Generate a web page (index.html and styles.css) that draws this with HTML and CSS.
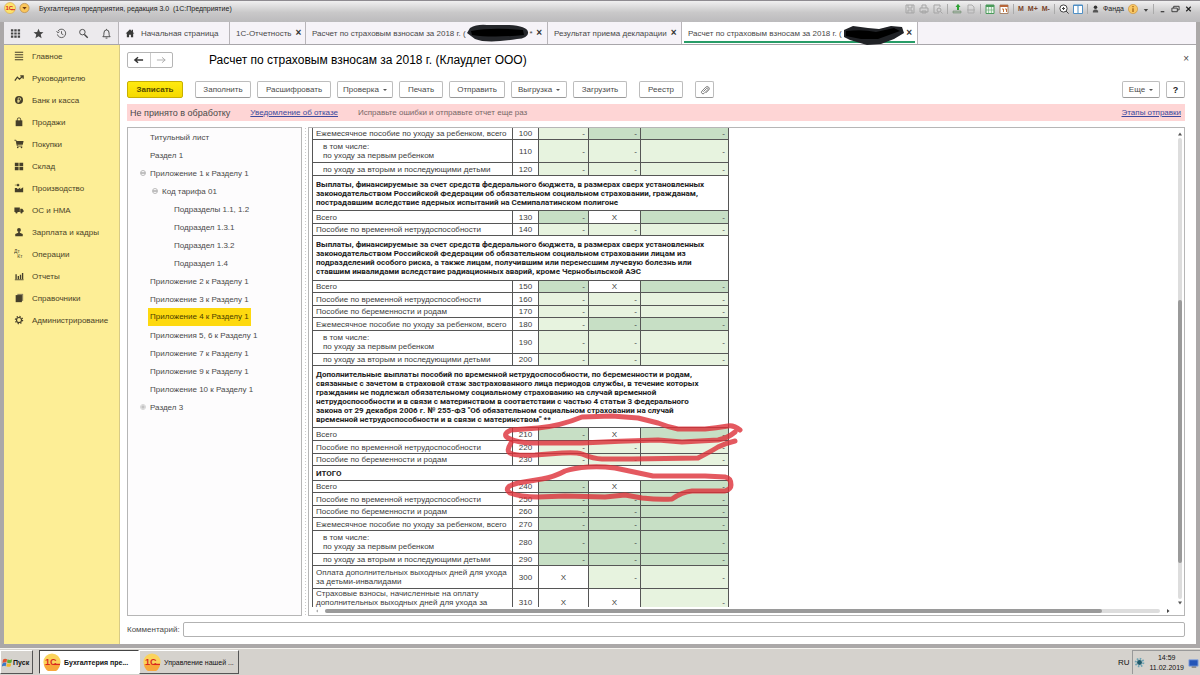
FILE: index.html
```html
<!DOCTYPE html>
<html lang="ru">
<head>
<meta charset="utf-8">
<title>Бухгалтерия предприятия</title>
<link rel="stylesheet" href="styles.css">
</head>
<body>
<div class="window">
  <header class="titlebar">
    <svg class="logo" viewBox="0 0 12 12"><circle cx="6" cy="6" r="5.5" fill="#fde36b" stroke="#d9a54a" stroke-width=".6"/><text class="mark" x="1.500" y="8" font-size="6">1С</text><path d="M7 7.700h4" stroke="#d9281e"/></svg>
    <svg class="logo" viewBox="0 0 12 12"><circle cx="6" cy="6" r="5" fill="#fbc65a" stroke="#b98a4a" stroke-width=".8"/><path d="M3.6 5h4.8L6 7.6z" fill="#6b3a10"/></svg>
    <span class="app-title">Бухгалтерия предприятия, редакция 3.0&nbsp; (1С:Предприятие)</span>
    <div class="tools">
      <svg viewBox="0 0 10 10"><path d="M1 1h8v8H1zM3 1v3h4V1M3 9V6h4v3" fill="none" stroke="#a5a5a5"/></svg>
      <svg viewBox="0 0 10 10"><path d="M1 4h8v4H1zM3 4V1h4v3M3 7h4v2H3z" fill="none" stroke="#a5a5a5"/></svg>
      <svg viewBox="0 0 10 10"><path d="M6 9H1V1h6v2" fill="none" stroke="#a5a5a5"/><circle cx="6" cy="6" r="2" fill="none" stroke="#a5a5a5"/><path d="M7.5 7.5L9.5 9.5" stroke="#a5a5a5"/></svg>
      <i></i>
      <svg viewBox="0 0 10 10"><path d="M1 7h8v2H1z" fill="#a8b8a8" stroke="#6e8a6e" stroke-width=".6"/><path d="M1 5l3-1M5 6V3H3.500L6-.2 8.500 3H7v3z" fill="#2fa336"/></svg>
      <svg viewBox="0 0 10 10"><path d="M2 1h4l2 2v6H2zM1 6h8" fill="none" stroke="#adadad"/></svg>
      <i></i>
      <svg viewBox="0 0 10 10"><path d="M1 1h8v8.500H1z" fill="#eef6ee" stroke="#4a9a5a"/><path d="M1 1h8v2H1z" fill="#4a9a5a"/><path d="M3.600 3v6M6.400 3v6M1 6h8" stroke="#6eb07a" stroke-width=".7"/></svg>
      <svg viewBox="0 0 10 10"><path d="M1 1h8v8.500H1z" fill="#fff" stroke="#a8846a"/><path d="M1 1h8v2H1z" fill="#b8673a"/><path d="M3 5h1.500v3M6 5h1.500v3" fill="none" stroke="#c0703a"/></svg>
      <i></i>
      <b>M</b><b>M+</b><b>M-</b>
      <i></i>
      <svg viewBox="0 0 10 10"><circle cx="4.500" cy="4.500" r="3.600" fill="#fff" stroke="#444"/><path d="M7 7l2.600 2.600M3 4.500h3M4.500 3v3" stroke="#444"/></svg>
      <svg viewBox="0 0 10 10"><path d="M.5 1h9v8.500h-9z" fill="#fff" stroke="#4f8fc4"/><path d="M0 1.500h10M5 1v8" stroke="#4f8fc4"/></svg>
      <i></i>
      <svg class="narrow" viewBox="0 0 8 10"><circle cx="4" cy="3" r="2" fill="#333"/><path d="M1 9V7l2-1.500h2L7 7v2z" fill="#555"/></svg>
      <span>Фанда</span>
      <svg viewBox="0 0 10 10"><circle cx="5" cy="5" r="4.600" fill="#f8c765" stroke="#c98e35" stroke-width=".6"/><path d="M5 4.300V8M5 2v1.300" stroke="#a4620f" stroke-width="1.300"/></svg>
      <svg class="narrow" viewBox="0 0 8 10"><path d="M2 5h5L4.500 8z" fill="#444"/></svg>
      <i></i>
      <svg class="win" viewBox="0 0 10 10"><path d="M3 8h4" stroke="#333" stroke-width="1.300"/></svg>
      <svg class="win" viewBox="0 0 10 10"><path d="M3 4V2h6v4H7M1 4h6v4H1z" fill="none" stroke="#333"/></svg>
      <svg class="win" viewBox="0 0 10 10"><path d="M2.500 2.500l5 5M7.500 2.500l-5 5" stroke="#222" stroke-width="1.300"/></svg>
    </div>
  </header>

  <div class="app">
    <nav class="tabs">
      <div class="quick">
        <svg viewBox="0 0 12 12"><path d="M1 2.500h10M1 6h10M1 9.500h10" stroke="#444" stroke-width="2.400" stroke-dasharray="2.600 1.100"/></svg>
        <svg viewBox="0 0 12 12"><path d="M6 .8l1.500 3.600 3.900.3-3 2.500 1 3.900L6 9l-3.400 2.100 1-3.900-3-2.500 3.900-.3z" fill="#444"/></svg>
        <svg viewBox="0 0 12 12"><path d="M2 3.500A4.600 4.600 0 1 1 1.500 7M.6 3.500L2 5.300 3.800 4M6 3.500V6.300l2 1" fill="none" stroke="#555"/></svg>
        <svg viewBox="0 0 12 12"><circle cx="4.800" cy="4.500" r="3" fill="none" stroke="#444"/><path d="M7 7l3.600 3.600" stroke="#444" stroke-width="1.500"/></svg>
        <svg viewBox="0 0 12 12"><path d="M2 9.500c1.200-1 1.200-2 1.200-4a2.800 3.400 0 0 1 5.600 0c0 2 0 3 1.200 4zM5 11h2M6 1v1" fill="none" stroke="#444"/></svg>
      </div>
      <div class="tab home"><svg viewBox="0 0 12 12"><path d="M6 1.500L.8 6.500h1.400V11h2.700V8h2.200v3h2.700V6.500h1.400L9.600 5V2H8v1.500z" fill="#3a3a3a"/></svg>Начальная страница</div>
      <div class="tab t2">1С-Отчетность<button aria-label="Закрыть">×</button></div>
      <div class="tab t3"><span>Расчет по страховым взносам за 2018 г. (</span><svg class="blot" viewBox="0 0 62 20"><path d="M3 5Q10 1 20 2L42 2Q60 3 61 9Q62 15 50 16Q20 21 8 16L0 10z" fill="#24262a"/><path d="M4 8Q25 4 56 7L57 12Q25 15 5 12z" fill="#000"/></svg><span>*</span><button aria-label="Закрыть">×</button></div>
      <div class="tab t4">Результат приема декларации<button aria-label="Закрыть">×</button></div>
      <div class="tab t5 active"><span>Расчет по страховым взносам за 2018 г. (</span><svg class="blot low" viewBox="0 0 62 20"><path d="M1 5L10 1 25 3 36 4 48 1 59 2 61 8 51 14 38 19 24 20 7 15 1 12z" fill="#202226"/><path d="M3 6Q20 4 33 7L51 3 57 6 35 14 18 14 3 11z" fill="#000"/></svg><button aria-label="Закрыть">×</button></div>
    </nav>

    <div class="body">
      <aside class="sections">
        <a href="#"><svg viewBox="0 0 12 12"><path d="M1 1.500h10M1 4.500h10M1 7.500h10M1 10.500h10" stroke="#453f2a" stroke-width="1.300"/></svg>Главное</a>
        <a href="#"><svg viewBox="0 0 12 12"><path d="M1 9l3-4 2.500 2.500L10.500 4M7.500 3.500H11V7" fill="none" stroke="#453f2a" stroke-width="1.500"/></svg>Руководителю</a>
        <a href="#"><svg viewBox="0 0 12 12"><circle cx="6" cy="6" r="4.800" fill="#453f2a"/><path d="M5 9.500V3.500h1.600a1.500 1.500 0 0 1 0 3H4M4 8h3" fill="none" stroke="#fff09a" stroke-width=".9"/></svg>Банк и касса</a>
        <a href="#"><svg viewBox="0 0 12 12"><path d="M2 4h8v7H2z" fill="#453f2a"/><path d="M4 5V2.500a2 1.500 0 0 1 4 0V5" fill="none" stroke="#453f2a"/></svg>Продажи</a>
        <a href="#"><svg viewBox="0 0 12 12"><path d="M.5 1.500h2L4 8.500h6" fill="none" stroke="#453f2a"/><path d="M2.500 2.500h9l-1 4.500h-7z" fill="#453f2a"/><circle cx="4.500" cy="10.200" r="1" fill="#453f2a"/><circle cx="9" cy="10.200" r="1" fill="#453f2a"/></svg>Покупки</a>
        <a href="#"><svg viewBox="0 0 12 12"><path d="M1 2h4.500v4H1zM6.500 2H11v4H6.500zM1 7h4.500v4H1zM6.500 7H11v4H6.500z" fill="#453f2a"/></svg>Склад</a>
        <a href="#"><svg viewBox="0 0 12 12"><path d="M1 11V6h2.500l1 1.500L7.500 5.500v2L11 5v6z" fill="#453f2a"/><path d="M1 2.500h1.500M3.500 1.500H6v2H3.500z" fill="#453f2a" stroke="#453f2a" stroke-width=".6"/></svg>Производство</a>
        <a href="#"><svg viewBox="0 0 12 12"><path d="M.5 3H7v5.500H.5zM7.500 4.500H10l1.500 2v2h-4z" fill="#453f2a"/><circle cx="3" cy="9" r="1.300" fill="#453f2a"/><circle cx="9" cy="9" r="1.300" fill="#453f2a"/></svg>ОС и НМА</a>
        <a href="#"><svg viewBox="0 0 12 12"><circle cx="6" cy="3.500" r="2.300" fill="#453f2a"/><path d="M5 5h2v2l3.500 1.500V11h-9V8.500L5 7z" fill="#453f2a"/></svg>Зарплата и кадры</a>
        <a href="#"><svg viewBox="0 0 12 12"><text x="0" y="5" font-size="6" fill="#453f2a">Дт</text><text x="4" y="11" font-size="6" fill="#453f2a">Кт</text></svg>Операции</a>
        <a href="#"><svg viewBox="0 0 12 12"><path d="M2.500 10V4M5.200 10V6M7.800 10V4.500M10.300 10V2.500" stroke="#453f2a" stroke-width="1.600"/><path d="M1 10.500h10.500" stroke="#453f2a"/></svg>Отчеты</a>
        <a href="#"><svg viewBox="0 0 12 12"><path d="M4 1h7v8.500H4z" fill="#8d8460"/><path d="M2 2.500h7.500V11H2z" fill="#453f2a"/></svg>Справочники</a>
        <a href="#"><svg viewBox="0 0 12 12"><circle cx="6" cy="6" r="3" fill="none" stroke="#453f2a" stroke-width="1.400"/><circle cx="6" cy="6" r="4.300" fill="none" stroke="#453f2a" stroke-width="1.500" stroke-dasharray="1.500 1.877"/></svg>Администрирование</a>
      </aside>

      <main class="content">
        <div class="heading">
          <div class="history"><button aria-label="Назад"><svg viewBox="0 0 12 10"><path d="M2 5h9M5.500 2L2 5l3.500 3" fill="none" stroke="#333" stroke-width="1.500"/></svg></button><button aria-label="Вперед"><svg viewBox="0 0 12 10"><path d="M1 5h9M6.500 2L10 5 6.500 8" fill="none" stroke="#aaa"/></svg></button></div>
          <h1>Расчет по страховым взносам за 2018 г. (Клаудлет ООО)</h1>
          <button class="close" aria-label="Закрыть">×</button>
        </div>
        <div class="commands">
          <button class="primary w56">Записать</button>
          <button class="w56 gap-l">Заполнить</button>
          <button class="w74">Расшифровать</button>
          <button class="w56">Проверка <em></em></button>
          <button class="w44">Печать</button>
          <button class="w56">Отправить</button>
          <button class="w56">Выгрузка <em></em></button>
          <button class="w54">Загрузить</button>
          <button class="w44 gap-l">Реестр</button>
          <button class="w18 gap-l" aria-label="Файлы"><svg viewBox="0 0 12 12"><path d="M4 8l4-4a1 1 0 0 1 1.500 1.500L5 10A1.900 1.900 0 0 1 2.300 7.300L7 2.500a2.500 2.500 0 0 1 3.700 3.300L7 9.500" fill="none" stroke="#666"/></svg></button>
          <button class="w38 right">Еще <em></em></button>
          <button class="w18 help">?</button>
        </div>
        <div class="notice">
          <strong>Не принято в обработку</strong>
          <a href="#">Уведомление об отказе</a>
          <span>Исправьте ошибки и отправьте отчет еще раз</span>
          <a class="right" href="#">Этапы отправки</a>
        </div>

        <div class="panes">
          <ul class="tree">
            <li><span>Титульный лист</span></li>
            <li><span>Раздел 1</span></li>
            <li><svg viewBox="0 0 8 8"><circle cx="4" cy="4" r="2.500" fill="none" stroke="#aaa" stroke-width=".8"/><path d="M2 4h4" stroke="#888"/></svg><span>Приложение 1 к Разделу 1</span></li>
            <li class="l2"><svg viewBox="0 0 8 8"><circle cx="4" cy="4" r="2.500" fill="none" stroke="#aaa" stroke-width=".8"/><path d="M2 4h4" stroke="#888"/></svg><span>Код тарифа 01</span></li>
            <li class="l3"><span>Подразделы 1.1, 1.2</span></li>
            <li class="l3"><span>Подраздел 1.3.1</span></li>
            <li class="l3"><span>Подраздел 1.3.2</span></li>
            <li class="l3"><span>Подраздел 1.4</span></li>
            <li><span>Приложение 2 к Разделу 1</span></li>
            <li><span>Приложение 3 к Разделу 1</span></li>
            <li class="selected"><span>Приложение 4 к Разделу 1</span></li>
            <li><span>Приложения 5, 6 к Разделу 1</span></li>
            <li><span>Приложение 7 к Разделу 1</span></li>
            <li><span>Приложение 9 к Разделу 1</span></li>
            <li><span>Приложение 10 к Разделу 1</span></li>
            <li><svg viewBox="0 0 8 8"><circle cx="4" cy="4" r="2.500" fill="none" stroke="#bbb" stroke-width=".6"/><path d="M2 4h4M4 2v4" stroke="#999" stroke-width=".7"/></svg><span>Раздел 3</span></li>
          </ul>
          <div class="splitter"></div>
          <section class="report">
            <div class="sheet">
              <table>
                <colgroup><col class="c-name"><col class="c-code"><col class="c-a"><col class="c-b"><col class="c-c"></colgroup>
                <tbody>
                <tr class="s"><td>Ежемесячное пособие по уходу за ребенком, всего</td><td>100</td><td class="g">-</td><td class="d">-</td><td class="d">-</td></tr>
                <tr class="two"><td class="in">в том числе:<br>по уходу за первым ребенком</td><td>110</td><td class="g">-</td><td class="g">-</td><td class="g">-</td></tr>
                <tr class="m"><td class="in">по уходу за вторым и последующими детьми</td><td>120</td><td class="g">-</td><td class="g">-</td><td class="g">-</td></tr>
                <tr class="h3"><th colspan="5">Выплаты, финансируемые за счет средств федерального бюджета, в размерах сверх установленных<br>законодательством Российской Федерации об обязательном социальном страховании, гражданам,<br>пострадавшим вследствие ядерных испытаний на Семипалатинском полигоне</th></tr>
                <tr class="m"><td>Всего</td><td>130</td><td class="d">-</td><td class="x">Х</td><td class="d">-</td></tr>
                <tr class="s"><td>Пособие по временной нетрудоспособности</td><td>140</td><td class="g">-</td><td class="g">-</td><td class="g">-</td></tr>
                <tr class="h4"><th colspan="5">Выплаты, финансируемые за счет средств федерального бюджета, в размерах сверх установленных<br>законодательством Российской Федерации об обязательном социальном страховании лицам из<br>подразделений особого риска, а также лицам, получившим или перенесшим лучевую болезнь или<br>ставшим инвалидами вследствие радиационных аварий, кроме Чернобыльской АЭС</th></tr>
                <tr class="s"><td>Всего</td><td>150</td><td class="d">-</td><td class="x">Х</td><td class="d">-</td></tr>
                <tr class="m"><td>Пособие по временной нетрудоспособности</td><td>160</td><td class="g">-</td><td class="g">-</td><td class="g">-</td></tr>
                <tr class="s"><td>Пособие по беременности и родам</td><td>170</td><td class="g">-</td><td class="g">-</td><td class="g">-</td></tr>
                <tr class="m"><td>Ежемесячное пособие по уходу за ребенком, всего</td><td>180</td><td class="g">-</td><td class="d">-</td><td class="d">-</td></tr>
                <tr class="two"><td class="in">в том числе:<br>по уходу за первым ребенком</td><td>190</td><td class="g">-</td><td class="g">-</td><td class="g">-</td></tr>
                <tr class="s"><td class="in">по уходу за вторым и последующими детьми</td><td>200</td><td class="g">-</td><td class="g">-</td><td class="g">-</td></tr>
                <tr class="h6"><th colspan="5">Дополнительные выплаты пособий по временной нетрудоспособности, по беременности и родам,<br>связанные с зачетом в страховой стаж застрахованного лица периодов службы, в течение которых<br>гражданин не подлежал обязательному социальному страхованию на случай временной<br>нетрудоспособности и в связи с материнством в соответствии с частью 4 статьи 3 Федерального<br>закона от 29 декабря 2006 г. № 255-ФЗ "Об обязательном социальном страховании на случай<br>временной нетрудоспособности и в связи с материнством" **</th></tr>
                <tr class="m"><td>Всего</td><td>210</td><td class="d">-</td><td class="x">Х</td><td class="d">-</td></tr>
                <tr class="m"><td>Пособие по временной нетрудоспособности</td><td>220</td><td class="g">-</td><td class="g">-</td><td class="g">-</td></tr>
                <tr class="s"><td>Пособие по беременности и родам</td><td>230</td><td class="g">-</td><td class="g">-</td><td class="g">-</td></tr>
                <tr class="h1"><th colspan="5">ИТОГО</th></tr>
                <tr class="s"><td>Всего</td><td>240</td><td class="d">-</td><td class="x">Х</td><td class="d">-</td></tr>
                <tr class="m"><td>Пособие по временной нетрудоспособности</td><td>250</td><td class="d">-</td><td class="d">-</td><td class="d">-</td></tr>
                <tr class="s"><td>Пособие по беременности и родам</td><td>260</td><td class="d">-</td><td class="d">-</td><td class="d">-</td></tr>
                <tr class="m"><td>Ежемесячное пособие по уходу за ребенком, всего</td><td>270</td><td class="d">-</td><td class="d">-</td><td class="d">-</td></tr>
                <tr class="two"><td class="in">в том числе:<br>по уходу за первым ребенком</td><td>280</td><td class="d">-</td><td class="d">-</td><td class="d">-</td></tr>
                <tr class="s"><td class="in">по уходу за вторым и последующими детьми</td><td>290</td><td class="d">-</td><td class="d">-</td><td class="d">-</td></tr>
                <tr class="two"><td>Оплата дополнительных выходных дней для ухода<br>за детьми-инвалидами</td><td>300</td><td class="x">Х</td><td class="g">-</td><td class="g">-</td></tr>
                <tr class="last"><td>Страховые взносы, начисленные на оплату<br>дополнительных выходных дней для ухода за</td><td>310</td><td class="x">Х</td><td class="x">Х</td><td class="g">-</td></tr>
                </tbody>
              </table>
            </div>
            <div class="vbar"><svg viewBox="0 0 8 8"><path d="M2 5.500h4L4 2.500z" fill="#555"/></svg><div class="track"><div class="thumb"></div></div><svg viewBox="0 0 8 8"><path d="M2 2.500h4L4 5.500z" fill="#555"/></svg></div>
            <div class="hbar"><svg viewBox="0 0 8 8"><path d="M5 2.500v3L3 4z" fill="#aaa"/></svg><div class="track"><div class="thumb"></div></div><svg viewBox="0 0 8 8"><path d="M3 2v4l2.500-2z" fill="#444"/></svg></div>
            <svg class="marks" viewBox="500 405 250 100" fill="none" stroke="#dd3038" stroke-opacity=".8" stroke-width="5" stroke-linecap="round" stroke-linejoin="round">
              <path d="M740 430Q734 425 728 426Q716 428 705 429L678 429Q668 427 658 423L638 418 612 416 582 417Q560 426 538 428L511 430Q502 434 508 438Q518 443 532 443L582 443Q620 441 658 440L682 442 718 440Q728 438 735 432"/>
              <path d="M511 443Q506 451 510 453Q514 456 535 455L562 453Q576 452 582 454Q594 459 602 459L632 459 698 458Q710 452 718 447Q726 443 735 441"/>
              <path d="M542 479L518 483Q502 487 510 493Q520 497 538 497L565 496 605 497 625 495 642 498Q660 500 672 499Q682 492 692 491L725 491Q731 489 731 485Q731 478 725 477L705 476 653 476 615 468Q600 466 588 467Q574 468 565 471Q554 477 542 479z"/>
            </svg>
          </section>
        </div>
        <div class="comment"><label for="comment">Комментарий:</label><input id="comment" type="text"></div>
      </main>
    </div>
  </div>
</div>

<footer class="taskbar">
  <button class="start"><svg viewBox="0 0 12 12"><path d="M1 3Q3 1 5.500 2.500L4.800 6Q3 5 .5 6.500z" fill="#e0522d"/><path d="M6 2.500Q8.500 4 11 2.500L10.400 6Q8 7.500 5.500 6z" fill="#62aa35"/><path d="M.5 7Q3 5.500 4.700 6.500L4 10Q2 9-.3 10.500z" fill="#3b78c6"/><path d="M5.300 6.700Q7.500 8 10 6.700L9.500 10Q7 11.500 4.700 10z" fill="#f2b92e"/></svg>Пуск</button>
  <button class="task current"><svg viewBox="0 0 18 18"><circle cx="9" cy="9" r="8.600" fill="#fbd35c"/><path d="M1 11a8 8 0 0 0 16 0z" fill="#f8a83b"/><text class="mark" x="2" y="12" font-size="9">1С</text><path d="M10.500 11.400H17" stroke="#d9281e" stroke-width="1.300"/></svg>Бухгалтерия пре...</button>
  <button class="task"><svg viewBox="0 0 18 18"><circle cx="9" cy="9" r="8.600" fill="#fbd35c"/><path d="M1 11a8 8 0 0 0 16 0z" fill="#f8a83b"/><text class="mark" x="2" y="12" font-size="9">1С</text><path d="M10.500 11.400H17" stroke="#d9281e" stroke-width="1.300"/></svg>Управление нашей ...</button>
  <span class="lang">RU</span>
  <div class="tray"><svg viewBox="0 0 12 12"><circle cx="6" cy="6" r="4" fill="none" stroke="#6fa5b5" stroke-width="2.500" stroke-dasharray="1.600 1.500"/><circle cx="6" cy="6" r="2.700" fill="#1e5a6c"/></svg><time>14:59<br>11.02.2019</time><svg viewBox="0 0 12 12"><path d="M1 3h10v7H1z" fill="#2456b8" stroke="#8ba7dc"/><path d="M4 11h5" stroke="#555"/></svg></div>
</footer>
</body>
</html>
```

FILE: styles.css
```css
* { box-sizing: border-box; }
body { margin: 0; height: 100vh; display: flex; flex-direction: column; font-family: "Liberation Sans", Arial, sans-serif; font-size: 8px; color: #4a4a4a; background: #d5d2cd; overflow: hidden; }
button, input { font: inherit; color: inherit; }
button { padding: 0; border: 0; background: none; }
svg { display: block; flex: none; }
.mark { font-weight: bold; fill: #d9281e; }

.window { flex: 1; min-height: 0; display: flex; flex-direction: column; padding: 0 4px 4px; background: #aba8a8; border-top: 1px solid #8e8b90; }
.titlebar { flex: none; height: 21px; display: flex; align-items: flex-start; gap: 3px; margin: 0 -4px; padding: 1px 7px 0 4px; background: linear-gradient(#f0f0f0, #c9c8c9 55%, #bcbbbd); color: #222; font-size: 7px; }
.logo { width: 12px; height: 12px; }
.logo + .logo { width: 11px; }
.app-title { margin-left: 6px; line-height: 13px; }
.tools { margin-left: auto; height: 13px; display: flex; align-items: center; gap: 4px; }
.tools svg { width: 10px; height: 10px; }
.tools svg.narrow { width: 7px; }
.tools svg.win { width: 9px; }
.tools i { width: 1px; height: 10px; background: #aaa; }
.tools b { color: #79452a; }

.app { flex: 1; min-height: 0; display: flex; flex-direction: column; background: #fff; }
.tabs { flex: none; height: 23px; display: flex; background: #f6f3f8; border-bottom: 1px solid #a8a6aa; color: #484848; }
.quick { width: 115px; display: flex; align-items: center; justify-content: space-between; padding: 0 6px; border-right: 1px solid #b8b5b9; background: #eceaed; }
.quick svg { width: 11px; height: 11px; }
.tab { display: flex; align-items: center; gap: 4px; padding: 0 5px 0 6px; border-right: 1px solid #b8b5b9; white-space: nowrap; }
.tab button { margin-left: auto; font-size: 10px; font-weight: bold; line-height: 12px; color: #333; }
.home { width: 111px; gap: 6px; }
.home svg { width: 10px; height: 10px; }
.t2 { width: 76px; }
.t3 { width: 242px; gap: 1px; }
.t4 { width: 134px; }
.t5 { width: 236px; gap: 1px; }
.tab.active { background: linear-gradient(#279c67, #279c67) center bottom 1px / calc(100% - 4px) 2px no-repeat #fff; }
.blot { width: 62px; height: 20px; }
.blot.low { margin-top: 4px; }

.body { flex: 1; min-height: 0; display: flex; }
.sections { flex: none; width: 116px; display: flex; flex-direction: column; background: #fdee96; border-right: 1px solid #d8cb86; }
.sections a { display: flex; align-items: center; gap: 8px; height: 22px; padding-left: 10px; color: #4a4328; text-decoration: none; }
.sections svg { width: 10px; height: 10px; }

.content { flex: 1; min-width: 0; display: flex; flex-direction: column; padding: 7px 11px 7px 7px; }
.heading { flex: none; display: flex; align-items: center; height: 16px; }
.history { width: 46px; height: 16px; display: flex; border: 1px solid #b5b5b5; border-radius: 2px; }
.history button { flex: 1; display: grid; place-items: center; }
.history button + button { border-left: 1px solid #ccc; }
.history svg { width: 11px; height: 10px; }
h1 { margin: 0 0 0 36px; font-size: 12px; font-weight: normal; line-height: 16px; color: #000; }
.close { margin-left: auto; font-size: 10px; line-height: 14px; margin-right: -4px; align-self: flex-start; }
.commands { flex: none; display: flex; gap: 6px; margin-top: 13px; height: 17px; }
.commands button { height: 17px; display: flex; align-items: center; justify-content: center; gap: 4px; border: 1px solid #bdbdbd; border-bottom-color: #999; border-radius: 2px; background: #fff; white-space: nowrap; }
.commands em { border: 2px solid transparent; border-top-color: #555; border-bottom: 0; }
.commands svg { width: 10px; height: 10px; }
.commands .primary { background: linear-gradient(#ffea10, #f5d900); border-color: #c8b000; font-weight: bold; color: #554a00; }
.commands .w56 { width: 56px; }
.commands .w74 { width: 74px; }
.commands .w44 { width: 44px; }
.commands .w54 { width: 54px; }
.commands .w38 { width: 38px; }
.commands .w18 { width: 19px; }
.commands .gap-l { margin-left: 6px; }
.commands .help { font-weight: bold; color: #222; font-size: 9px; }
.right, .commands .right { margin-left: auto; }
.notice { flex: none; display: flex; align-items: center; gap: 20px; margin-top: 6px; height: 17px; padding: 0 4px 0 3px; background: #fed5d5; }
.notice strong { font-size: 9px; font-weight: normal; }
.notice a { color: #3c4a9e; }
.notice span { color: #776868; }

.panes { flex: 1; min-height: 0; display: flex; margin-top: 6px; }
.tree { width: 175px; flex: none; margin: 0; padding: 0 0 0 9px; list-style: none; border: 1px solid #b6b6b6; background: #fdfcfd; }
.tree li { height: 18px; display: flex; align-items: center; padding-left: 13px; white-space: nowrap; }
.tree li svg { width: 8px; height: 8px; margin: 0 3px 0 -11px; }
.tree .l2 { padding-left: 25px; }
.tree .l3 { padding-left: 37px; }
.tree .selected span { margin-left: -2px; padding: 0 2px; line-height: 18px; background: #fed90f; color: #4a3c00; }
.splitter { width: 6px; flex: none; background: radial-gradient(circle, #ccc 1px, transparent 1px) center / 3px 3px repeat-y; }
.report { flex: 1; min-width: 0; position: relative; display: grid; grid-template: minmax(0, 1fr) 8px / minmax(0, 1fr) 8px; border: 1px solid #b6b6b6; }
.sheet { overflow: hidden; padding-left: 3px; }
table { width: 416px; table-layout: fixed; border-collapse: collapse; font-size: 8px; line-height: 9px; color: #3c3c3c; margin-top: -1px; }
td, th { padding: 0 3px; border: 1px solid #565656; text-align: left; white-space: nowrap; }
th { font-family: Roboto, "Liberation Sans", sans-serif; color: #222; }
.c-name { width: 200px; }
.c-code { width: 26px; }
.c-a { width: 50px; }
.c-b { width: 52px; }
.c-c { width: 88px; }
td:nth-child(2), .x { text-align: center; }
.g, .d { text-align: right; }
.g { background: #e7f3df; }
.d { background: #c7dfc5; }
td.in { padding-left: 10px; }
.s { height: 12px; }
.m { height: 13px; }
.two { height: 23px; }
.last td { vertical-align: bottom; border-bottom: 0; }
.h1 { height: 15px; }
.h3 { height: 35px; }
.h4 { height: 45px; }
.h6 { height: 62px; }
.vbar { display: flex; flex-direction: column; align-items: center; padding: 2px 0 0; }
.vbar svg, .hbar svg { width: 8px; height: 8px; }
.track { flex: 1; border-radius: 2px; background: #ddd; }
.vbar .track { width: 4px; display: flex; flex-direction: column; justify-content: flex-end; padding-bottom: 36px; }
.thumb { background: #9a9a9a; border-radius: 2px; }
.vbar .thumb { height: 62%; }
.hbar { display: flex; align-items: center; padding: 0 4px; gap: 4px; }
.hbar .track { height: 4px; display: flex; }
.hbar .thumb { width: 93%; }
.marks { position: absolute; left: 191px; top: 277px; width: 250px; height: 100px; }
.comment { flex: none; display: flex; align-items: center; gap: 3px; margin-top: 6px; }
.comment input { flex: 1; min-width: 0; height: 15px; border: 1px solid #b2b2b2; border-radius: 2px; }

.taskbar { flex: none; height: 27px; display: flex; align-items: center; padding: 1px 0; border-top: 1px solid #f4f2ee; background: #d5d2cd; color: #111; }
.taskbar button { height: 24px; display: flex; align-items: center; gap: 3px; border: 1px solid; border-color: #fff #555 #555 #fff; white-space: nowrap; font-size: 7px; }
.taskbar .start { width: 33px; padding-left: 1px; gap: 0; font-weight: bold; }
.start svg { width: 11px; height: 11px; }
.taskbar .task { width: 100px; padding-left: 3px; }
.taskbar .current { margin-left: 6px; background: #fff; border-color: #444 #fff #fff #444; font-weight: bold; }
.task svg { width: 18px; height: 18px; }
.lang { margin-left: auto; font-size: 8px; }
.tray { height: 24px; display: flex; align-items: center; gap: 4px; margin-left: 3px; padding: 0 1px; border-left: 1px solid #999; border-top: 1px solid #999; text-align: center; }
.tray svg { width: 11px; height: 11px; }
.tray time { line-height: 10px; font-size: 7px; }
```
